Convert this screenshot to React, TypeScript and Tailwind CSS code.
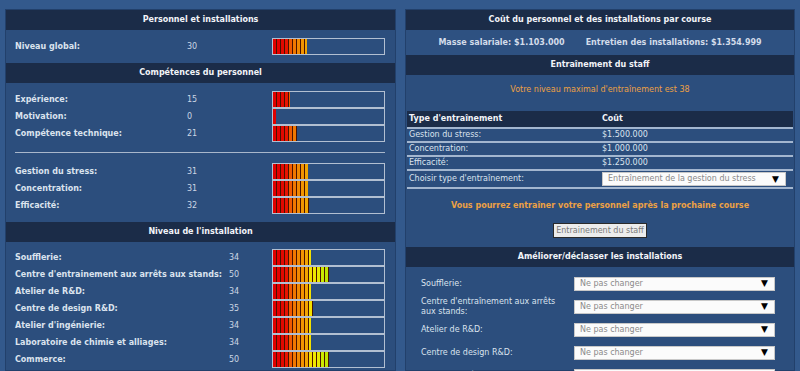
import React from "react"

const FONT = "font-['DejaVu_Sans',sans-serif]"

type Stat = { label: string; value: number }

const overall: Stat[] = [{ label: "Niveau global:", value: 30 }]

const skills: Stat[] = [
  { label: "Expérience:", value: 15 },
  { label: "Motivation:", value: 0 },
  { label: "Compétence technique:", value: 21 },
]

const mental: Stat[] = [
  { label: "Gestion du stress:", value: 31 },
  { label: "Concentration:", value: 31 },
  { label: "Efficacité:", value: 32 },
]

const facilities: Stat[] = [
  { label: "Soufflerie:", value: 34 },
  { label: "Centre d'entrainement aux arrêts aux stands:", value: 50 },
  { label: "Atelier de R&D:", value: 34 },
  { label: "Centre de design R&D:", value: 35 },
  { label: "Atelier d'ingénierie:", value: 34 },
  { label: "Laboratoire de chimie et alliages:", value: 34 },
  { label: "Commerce:", value: 50 },
]

const trainingCosts = [
  { label: "Gestion du stress:", cost: "$1.500.000" },
  { label: "Concentration:", cost: "$1.000.000" },
  { label: "Efficacité:", cost: "$1.250.000" },
]

const upgrades = [
  "Soufflerie:",
  "Centre d'entraînement aux arrêts aux stands:",
  "Atelier de R&D:",
  "Centre de design R&D:",
  "Atelier d'ingénierie:",
]

// colour of each 4px segment, by index
const SEGMENTS = [
  "bg-[#e00000]",
  "bg-[#e40000]",
  "bg-[#e20800]",
  "bg-[#e81400]",
  "bg-[#ee5a00]",
  "bg-[#f07800]",
  "bg-[#f08800]",
  "bg-[#f29400]",
  "bg-[#f2a400]",
  "bg-[#f2e000]",
  "bg-[#f0e800]",
  "bg-[#e8ea00]",
  "bg-[#cce800]",
  "bg-[#c0e400]",
  "bg-[#b4e000]",
]

function Bar({ value }: { value: number }) {
  const width = Math.max(3, Math.round(value * 1.13))
  const count = Math.ceil(width / 4)

  return (
    <div className="h-[17px] w-[113px] shrink-0 border border-[#b2bfd1] bg-[#2c4e7d]">
      <div
        className="flex h-full gap-[1px] overflow-hidden bg-[#4a1200]"
        style={{ width }}
      >
        {Array.from({ length: count }).map((_, i) => (
          <div
            key={i}
            className={`h-full w-[3px] shrink-0 ${SEGMENTS[Math.min(i, SEGMENTS.length - 1)]}`}
          />
        ))}
      </div>
    </div>
  )
}

function Header({ children }: { children: React.ReactNode }) {
  return (
    <div className="flex h-[20px] items-center justify-center bg-[#1b2c48] font-bold text-[#f2f4f8]">
      {children}
    </div>
  )
}

function StatRows({ rows, labelWidth }: { rows: Stat[]; labelWidth: string }) {
  return (
    <div className="flex flex-col">
      {rows.map((r) => (
        <div key={r.label} className="flex h-[17px] items-center">
          <div className={`${labelWidth} shrink-0 font-bold text-[#dbe3ee]`}>
            {r.label}
          </div>
          <div className="flex-1 text-[#cbd6e4]">{r.value}</div>
          <Bar value={r.value} />
        </div>
      ))}
    </div>
  )
}

function FakeSelect({ text, width }: { text: string; width: string }) {
  return (
    <div
      className={`flex h-[14px] ${width} items-center justify-between border border-[#c8c8c8] bg-[#fbfbfb] pl-[5px] pr-[6px]`}
    >
      <span className="text-[#8a8a8a]">{text}</span>
      <span className="text-[9px] leading-none text-black">▼</span>
    </div>
  )
}

export default function App() {
  return (
    <div
      className={`flex h-[371px] w-[800px] gap-[9px] overflow-hidden bg-[#33598c] px-[5px] pt-[9px] text-[8px] leading-[10px] ${FONT}`}
    >
      {/* left: personnel and facilities */}
      <div className="w-[391px] shrink-0 border border-[#22406b] bg-[#2c4e7d]">
        <Header>Personnel et installations</Header>
        <div className="pl-[9px] pr-[10px] py-[8px]">
          <StatRows rows={overall} labelWidth="w-[172px]" />
        </div>

        <Header>Compétences du personnel</Header>
        <div className="pl-[9px] pr-[10px] pt-[8px] pb-[8px]">
          <StatRows rows={skills} labelWidth="w-[172px]" />
          <div className="my-[10px] h-[1px] bg-[#a9b7cb]" />
          <StatRows rows={mental} labelWidth="w-[172px]" />
        </div>

        <Header>Niveau de l'installation</Header>
        <div className="pl-[9px] pr-[10px] pt-[7px]">
          <StatRows rows={facilities} labelWidth="w-[214px]" />
        </div>
      </div>

      {/* right: costs, training, upgrades */}
      <div className="w-[390px] shrink-0 border border-[#22406b] bg-[#2c4e7d]">
        <Header>Coût du personnel et des installations par course</Header>
        <div className="flex h-[25px] items-center justify-center gap-[21px] bg-[#2e5181] font-bold text-[#d3dcea]">
          <span>Masse salariale: $1.103.000</span>
          <span>Entretien des installations: $1.354.999</span>
        </div>

        <Header>Entraînement du staff</Header>
        <div className="pt-[10px] pb-[9px]">
          <p className="text-center text-[#eca144]">
            Votre niveau maximal d'entraînement est 38
          </p>

          <div className="mx-[1px] mt-[16px] text-[#dbe3ee]">
            <div className="flex h-[18px] items-center border-b-2 border-[#a3b6cf] bg-[#1b2c48] pl-[2px] font-bold text-[#f2f4f8]">
              <span className="w-[193px]">Type d'entraînement</span>
              <span>Coût</span>
            </div>
            {trainingCosts.map((t) => (
              <div
                key={t.label}
                className="flex h-[14px] items-center border-b-2 border-[#a3b6cf] pl-[2px]"
              >
                <span className="w-[193px]">{t.label}</span>
                <span>{t.cost}</span>
              </div>
            ))}
            <div className="flex h-[18px] items-center border-b-2 border-[#a3b6cf] pl-[2px]">
              <span className="w-[193px]">Choisir type d'entraînement:</span>
              <FakeSelect text="Entraînement de la gestion du stress" width="w-[184px]" />
            </div>
          </div>

          <p className="mt-[12px] text-center font-bold text-[#eca144]">
            Vous pourrez entraîner votre personnel après la prochaine course
          </p>

          <div className="mt-[12px] flex justify-center">
            <button className="h-[15px] border border-[#2a2a2a] bg-[#ececec] px-[2px] text-[8px] leading-none text-[#7a7a7a]">
              Entrainement du staff
            </button>
          </div>
        </div>

        <Header>Améliorer/déclasser les installations</Header>
        <div className="flex flex-col pt-[5px] pl-[15px]">
          {upgrades.map((u) => (
            <div key={u} className="flex h-[23px] items-center">
              <span className="w-[153px] shrink-0 pr-[8px] text-[#dbe3ee]">{u}</span>
              <FakeSelect text="Ne pas changer" width="w-[201px]" />
            </div>
          ))}
        </div>
      </div>
    </div>
  )
}
